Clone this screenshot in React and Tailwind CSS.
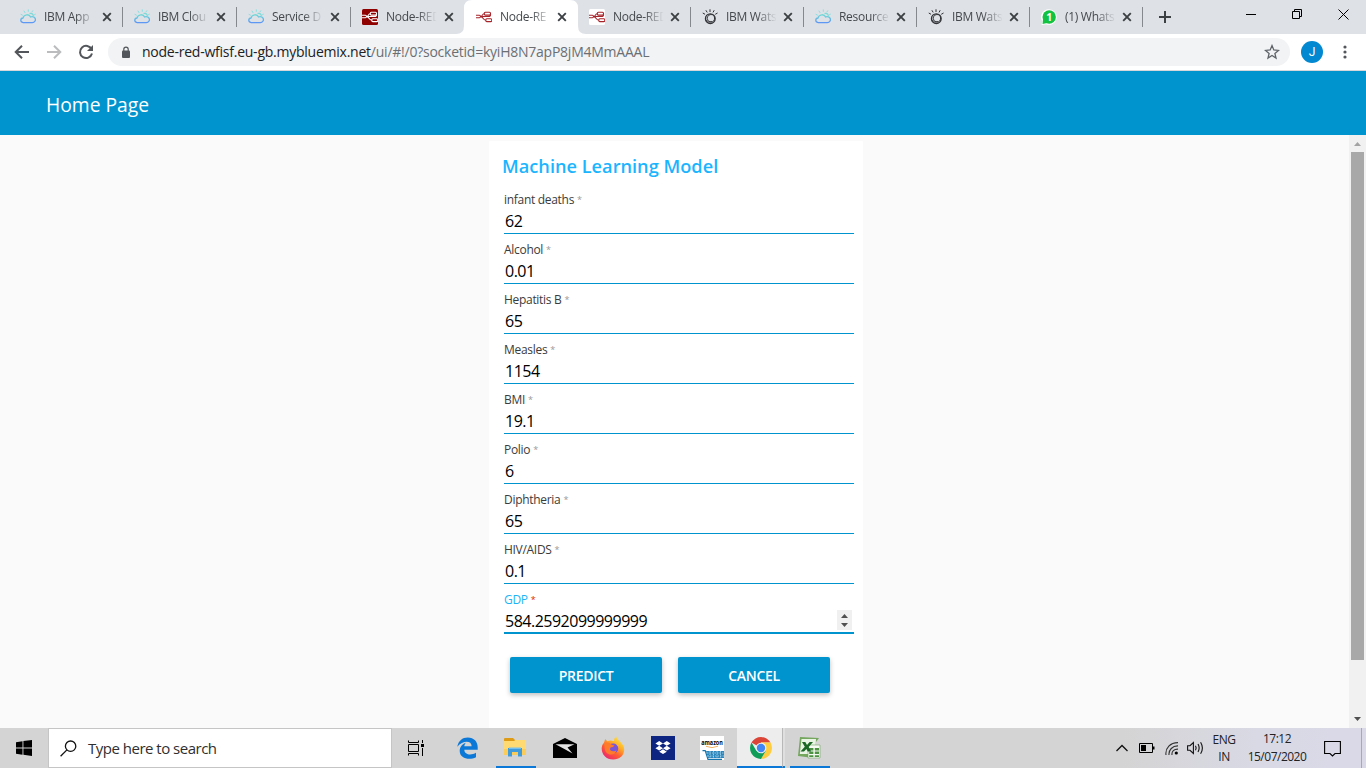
import React from "react";

function CloudIcon() {
  return (
    <svg width="16" height="16" viewBox="0 0 16 16" fill="none" strokeLinecap="round">
      <defs>
        <linearGradient id="cloud" x1="0" y1="0" x2="0" y2="1">
          <stop offset="0" stopColor="#6fdad5" />
          <stop offset="1" stopColor="#5c97f5" />
        </linearGradient>
      </defs>
      <path d="M3.2 13.6C-.2 13 .2 9.3 3 9C3.8 5.2 9.2 4.6 10.6 7.9C14.2 6.7 16.6 10 14.8 12.3Q14.1 13.6 12.3 13.6Z" stroke="url(#cloud)" strokeWidth="1.3" />
      <path d="M10 4.3Q13.3 4.1 13.4 7.4" stroke="#7adbd8" strokeWidth="1.2" />
      <path d="M8.3 .8V2.4M4 2L5 3.6M12.7 1.8L11.9 3M1 5.4L2.4 6.1M15.4 5.2L14.4 5.8" stroke="#8adfe0" strokeWidth="1" />
    </svg>
  );
}

function NodeRedIcon({ dark }) {
  const c = dark ? "#fff" : "#a8242b";
  return (
    <svg width="16" height="16" viewBox="0 0 16 16" fill="none">
      <rect width="16" height="16" rx="1.5" fill={dark ? "#8f0000" : "#fff"} />
      <g stroke={c} strokeWidth="1.1">
        <rect x="8.3" y="3.3" width="6.2" height="2.8" rx="1" />
        <rect x="9.8" y="9.8" width="6" height="2.8" rx="1" />
        <path d="M0 6.3H3.4Q4.5 6.3 4.5 7.5T3.4 8.7H0" />
        <path d="M4.5 7.5C7.2 7.5 5.6 4.7 8.3 4.7M4.5 7.5H12.5Q14.6 7.5 14.6 5.2M5 7.6C7.3 8 6.8 11.2 9.8 11.2" />
      </g>
    </svg>
  );
}

function WatsonIcon() {
  return (
    <svg width="16" height="16" viewBox="0 0 16 16" fill="none" stroke="#303236" strokeLinecap="round">
      <circle cx="8.3" cy="9.7" r="4.8" strokeWidth="1.4" />
      <circle cx="8.9" cy="9.2" r="3.7" strokeWidth=".9" />
      <path d="M4.2 11.4Q6.2 14.3 9.8 12.8" strokeWidth=".8" />
      <path d="M8 .7V2.6M4.1 1.6L5 3.1M12 1.6L11.2 3.1M1.1 4.2L2.7 5.1M15.2 4.2L13.6 5.1" strokeWidth="1" />
    </svg>
  );
}

function WhatsAppIcon() {
  return (
    <svg width="16" height="16" viewBox="0 0 16 16">
      <path d="M8 .2A7.8 7.8 0 1 1 5 15.2L.6 16L1.2 12A7.8 7.8 0 0 1 8 .2Z" fill="#fff" />
      <circle cx="8.2" cy="8" r="6.7" fill="#12c240" />
      <path d="M2 10L1.6 15L6 14Z" fill="#12c240" />
      <text x="8.2" y="11.8" textAnchor="middle" fontFamily="Open Sans, sans-serif" fontSize="10.5" fontWeight="700" fill="#fff">1</text>
    </svg>
  );
}

const tabs = [
  ["IBM App", <CloudIcon />],
  ["IBM Clou", <CloudIcon />],
  ["Service D", <CloudIcon />],
  ["Node-RED", <NodeRedIcon dark />],
  ["Node-RE", <NodeRedIcon />],
  ["Node-RED", <NodeRedIcon />],
  ["IBM Wats", <WatsonIcon />],
  ["Resource", <CloudIcon />],
  ["IBM Wats", <WatsonIcon />],
  ["(1) Whats", <WhatsAppIcon />],
];

function Tab({ label, icon, active, wide, divider }) {
  return (
    <div className={`relative flex h-[34px] shrink-0 items-center pl-[11px] ${wide ? "w-[114px]" : "w-[113px]"}`}>
      {active && (
        <svg className="absolute -left-[9px] top-0" width="130" height="34" viewBox="0 0 130 34">
          <path d="M0 34Q8 34 8 26V8Q8 0 16 0H114Q122 0 122 8V26Q122 34 130 34Z" fill="#fff" />
        </svg>
      )}
      <span className="relative h-4 w-4 shrink-0">{icon}</span>
      <span className="relative ml-2 w-[54px] whitespace-nowrap text-[12px] leading-4 tracking-[-0.3px] text-[#45494d] [mask-image:linear-gradient(to_right,black_58%,transparent_94%)]">
        {label}
      </span>
      <svg className={`relative ${wide ? "ml-1" : "ml-[3px]"}`} width="10" height="10" viewBox="0 0 10 10" stroke="#3c4043" strokeWidth="1.9">
        <path d="M1.2 1.2L8.8 8.8M8.8 1.2L1.2 8.8" />
      </svg>
      {divider && <span className="ml-auto h-5 w-px bg-[#85888c]" />}
    </div>
  );
}

function TabStrip() {
  return (
    <div className="flex h-[34px] bg-[#dee1e6] pl-[9px]">
      {tabs.map(([label, icon], i) => (
        <Tab key={i} label={label} icon={icon} active={i === 4} wide={i < 4} divider={i !== 3 && i !== 4} />
      ))}
      <svg className="ml-[15px] mt-[10px]" width="14" height="14" viewBox="0 0 14 14" stroke="#3c4043" strokeWidth="2">
        <path d="M7 1V13M1 7H13" />
      </svg>
      <div className="ml-auto flex items-start pt-[9px]">
        <svg width="10" height="11" viewBox="0 0 10 11" stroke="#000"><path d="M0 5.5H10" /></svg>
        <svg className="ml-9" width="11" height="11" viewBox="0 0 11 11" fill="none" stroke="#000">
          <path d="M.5 2.5H7.5V9.5H.5ZM2.5 2.5V.5H9.5V7.5H7.5" />
        </svg>
        <svg className="ml-[35px] mr-[17px]" width="11" height="11" viewBox="0 0 11 11" stroke="#000"><path d="M.5 .5L10.5 10.5M10.5 .5L.5 10.5" /></svg>
      </div>
    </div>
  );
}

function Toolbar() {
  return (
    <div className="flex h-[37px] items-center border-b border-[#d5d7da] bg-white pl-[13px]">
      <svg width="18" height="18" viewBox="0 0 18 18" fill="none" stroke="#53575b" strokeWidth="2"><path d="M16 9H3M9 2.7L2.7 9L9 15.3" /></svg>
      <svg className="ml-[14px]" width="18" height="18" viewBox="0 0 18 18" fill="none" stroke="#babcbe" strokeWidth="2"><path d="M2 9H15M9 2.7L15.3 9L9 15.3" /></svg>
      <svg className="ml-[14px]" width="18" height="18" viewBox="0 0 18 18" fill="none" stroke="#53575b" strokeWidth="2">
        <path d="M14.6 6.3A6.1 6.1 0 1 0 15 10.6" />
        <path d="M16 2V8H10Z" fill="#53575b" stroke="none" />
      </svg>
      <div className="ml-[13px] flex h-7 w-[1182px] items-center rounded-full bg-[#f1f3f4] pl-[13px] pr-[10px]">
        <svg width="10" height="13" viewBox="0 0 10 13" fill="none">
          <rect x="1" y="4.4" width="8" height="7.6" rx="1" fill="#53575b" />
          <path d="M2.8 5V3.3A2.2 2.2 0 0 1 7.2 3.3V5" stroke="#53575b" strokeWidth="1.2" />
        </svg>
        <span className="ml-[11px] whitespace-nowrap text-[14px] leading-5 tracking-[-0.24px] text-[#6b6f74]">
          <span className="text-[#202124]">node-red-wfisf.eu-gb.mybluemix.net</span>/ui/#!/0?socketid=kyiH8N7apP8jM4MmAAAL
        </span>
        <svg className="ml-auto" width="16" height="16" viewBox="0 0 16 16" fill="none" stroke="#5f6368" strokeWidth="1.3">
          <path d="M8 1.6L9.8 6L14.5 6.4L10.9 9.4L12 14L8 11.5L4 14L5.1 9.4L1.5 6.4L6.2 6Z" />
        </svg>
      </div>
      <div className="ml-[11px] flex h-[22px] w-[22px] items-center justify-center rounded-full bg-[#0288d1] font-[Roboto,sans-serif] text-[12px] text-white">J</div>
      <svg className="ml-5" width="4" height="14" viewBox="0 0 4 14" fill="#53575b"><circle cx="2" cy="2" r="1.6" /><circle cx="2" cy="7" r="1.6" /><circle cx="2" cy="12" r="1.6" /></svg>
    </div>
  );
}

const fields = [
  ["infant deaths", "62"],
  ["Alcohol", "0.01"],
  ["Hepatitis B", "65"],
  ["Measles", "1154"],
  ["BMI", "19.1"],
  ["Polio", "6"],
  ["Diphtheria", "65"],
  ["HIV/AIDS", "0.1"],
  ["GDP", "584.2592099999999"],
];

function Field({ label, value, focused }) {
  return (
    <div className="flex h-[50px] flex-col">
      <div className="mt-[6px] h-5 whitespace-nowrap text-[12px] leading-5 tracking-[-0.3px]">
        <span className={focused ? "text-[#1bb5f5]" : "text-[#3b3b3b]"}>{label}</span>
        <span className={`ml-[3px] align-[1px] text-[9px] ${focused ? "text-[#dd2c00]" : "text-[#999999]"}`}>*</span>
      </div>
      <div className={`flex items-start justify-between border-[#0094ce] pl-[1px] pr-[2px] text-[16px] text-black ${focused ? "h-[25px] border-b-2" : "h-[24px] border-b"}`}>
        <span className="leading-[22px] tracking-[-0.5px]">{value}</span>
        {focused && (
          <svg width="15" height="20" viewBox="0 0 15 20"><rect width="15" height="20" fill="#f0f0f0" /><path d="M4 8L7.5 4L11 8ZM4 13L7.5 17L11 13Z" fill="#505050" /></svg>
        )}
      </div>
    </div>
  );
}

function Button({ children }) {
  return (
    <button className="h-9 w-[152px] rounded-[2px] bg-[#0094ce] text-[14px] font-semibold tracking-[-0.28px] text-white shadow-[0_2px_5px_0_rgba(0,0,0,0.26)]">{children}</button>
  );
}

function Page() {
  return (
    <div className="flex h-[657px] flex-col bg-[#fafafa]">
      <div className="flex h-16 shrink-0 items-center bg-[#0094ce] pl-[46px] pt-1 text-[19.3px] text-white">Home Page</div>
      <div className="flex min-h-0 flex-1">
        <div className="ml-[489px] mt-[6px] w-[374px] bg-white">
          <h1 className="h-[43px] whitespace-nowrap pl-[13px] pt-[11px] text-[18.2px] font-semibold leading-7 text-[#1bb5ff]">Machine Learning Model</h1>
          <div className="ml-[15px] w-[350px]">
            {fields.map(([l, v], i) => <Field key={l} label={l} value={v} focused={i === 8} />)}
          </div>
          <div className="ml-[21px] mt-[23px] flex gap-4">
            <Button>PREDICT</Button>
            <Button>CANCEL</Button>
          </div>
        </div>
        <div className="ml-auto flex w-[17px] flex-col items-center bg-[#f1f1f1]">
          <svg width="17" height="17" viewBox="0 0 17 17"><path d="M5 11L8.5 7L12 11Z" fill="#a3a3a3" /></svg>
          <div className="h-[508px] w-[13px] bg-[#a8a8a8]" />
          <svg className="mt-auto" width="17" height="17" viewBox="0 0 17 17"><path d="M5 6L8.5 10L12 6Z" fill="#505050" /></svg>
        </div>
      </div>
    </div>
  );
}

function TaskIcon({ children, className = "" }) {
  return <div className={`flex h-10 w-12 shrink-0 items-center justify-center ${className}`}>{children}</div>;
}

function Taskbar() {
  return (
    <div className="flex h-10 items-center bg-[linear-gradient(to_right,#d4d4d4_0,#d4d4d4_82%,#d9d9e5_92%,#d9d9e8_100%)]">
      <TaskIcon>
        <svg width="16" height="16" viewBox="0 0 16 16"><path d="M0 2.2L6.5 1.3V7.5H0ZM7.4 1.1L16 0V7.5H7.4ZM0 8.4H6.5V14.7L0 13.8ZM7.4 8.4H16V16L7.4 14.8Z" /></svg>
      </TaskIcon>
      <div className="flex h-10 w-[344px] items-center border border-[#c5c5c5] bg-white pl-[11px]">
        <svg width="17" height="17" viewBox="0 0 17 17" fill="none" stroke="#111" strokeWidth="1.3"><circle cx="10.6" cy="6.2" r="5.2" /><path d="M6.9 9.9L.6 16.2" /></svg>
        <span className="ml-[11px] whitespace-nowrap pt-px text-[15px] tracking-[-0.5px] text-[#2f2f2f]">Type here to search</span>
      </div>
      <TaskIcon>
        <svg width="16" height="16" viewBox="0 0 16 16" fill="none" stroke="#000">
          <path d="M.5 .5V2.5H10.5V.5M.5 15.5V13.5H10.5V15.5M.5 4.5H10.5V11.5H.5ZM14.5 0V3M14.5 8V16" />
          <path d="M13 4H16V7H13Z" fill="#000" stroke="none" />
        </svg>
      </TaskIcon>
      <TaskIcon className="ml-[3px]">
        <svg width="21" height="22" viewBox="0 0 21 22"><path d="M.3 9.8C1.3 3.7 5.4.4 10.8.4C17 .4 20.7 4.7 20.7 10.2V12.8H7.3C7.6 18.3 14.6 18.5 19 15.8V20.2C12.2 23.8 2.7 21.4 2.7 14C2.7 9.7 5.4 7 8.8 5.7C7.7 6.9 7.4 8.4 7.3 9.3H14.6C14.8 3.2 5.5 3.4.3 9.8Z" fill="#0b78d7" /></svg>
      </TaskIcon>
      <TaskIcon className="relative">
        <svg width="22" height="20" viewBox="0 0 22 20">
          <path d="M0 1Q0 0 1 0H9L11 2V5H0Z" fill="#dd9b16" />
          <path d="M0 3H10L11.5 2H21Q22 2 22 3V17H0Z" fill="#ffda73" />
          <path d="M0 11H22V17H0Z" fill="#fccc5b" />
          <path d="M4 10H18V18.5H14V14H8V18.5H4Z" fill="#3f9bdb" />
          <path d="M5 9.5H17V11H5Z" fill="#73c0ee" />
        </svg>
        <span className="absolute bottom-0 left-[5px] h-[2px] w-10 bg-[#0b78d7]" />
      </TaskIcon>
      <TaskIcon className="ml-[2px]">
        <svg width="24" height="20" viewBox="0 0 24 20"><path d="M0 6L12 0L24 6V20H0Z" /><path d="M2.5 6.3H21.5L14.5 9.6L19.5 15.5L10.5 10.5Z" fill="#e3e3e3" /></svg>
      </TaskIcon>
      <TaskIcon>
        <svg width="24" height="24" viewBox="0 0 24 24">
          <defs><linearGradient id="fox" x1=".9" y1="0" x2=".2" y2="1"><stop stopColor="#fff14e" /><stop offset=".35" stopColor="#ffb327" /><stop offset=".65" stopColor="#ff5b32" /><stop offset="1" stopColor="#e92177" /></linearGradient></defs>
          <path d="M4.2 3L6.5 5.5Q8 4.4 9.5 4.5C11.7 4.7 12.5 5.1 13.2 5.2C12.6 2.5 14.5.9 15.3.4C15.7 3.9 19.5 4.6 21 8L22.5 9.8C25.1 17.9 19.7 23.5 12.2 23.5C5 23.5.3 18.1.7 11.7Q1 8.7 3.1 6.6Z" fill="url(#fox)" />
          <circle cx="12.2" cy="12.5" r="5" fill="#7855d9" />
          <path d="M3.2 6.8Q8.4 5.5 10.8 8.7L13.5 9.4Q12.5 11.5 9.5 11.6Q8 14.2 11 15Q14 15.8 15.5 14C14.4 20.6 5.2 20 3.7 13Z" fill="#ff7b2c" />
        </svg>
      </TaskIcon>
      <TaskIcon className="ml-[2px]">
        <svg width="24" height="24" viewBox="0 0 24 24"><rect width="24" height="24" fill="#0d2481" /><path d="M8.2 5L12 7.4L8.2 9.8L4.4 7.4ZM15.8 5L19.6 7.4L15.8 9.8L12 7.4ZM8.2 9.8L12 12.2L8.2 14.6L4.4 12.2ZM15.8 9.8L19.6 12.2L15.8 14.6L12 12.2ZM12 13.3L15.8 15.7L12 18.1L8.2 15.7Z" fill="#fff" /></svg>
      </TaskIcon>
      <TaskIcon className="ml-px">
        <svg width="24" height="24" viewBox="0 0 24 24">
          <rect width="24" height="24" fill="#fff" />
          <text x="12" y="8.8" textAnchor="middle" textLength="21.5" lengthAdjust="spacingAndGlyphs" fontFamily="Open Sans, sans-serif" fontSize="6.5" fontWeight="700">amazon</text>
          <path d="M6 10.3Q12 13 18 10.2" fill="none" stroke="#f2a64d" strokeWidth=".9" />
          <path d="M2.5 14.6H5.2L8 23.4H22" fill="none" stroke="#1574ac" strokeWidth="1.2" />
          <path d="M6 15H24V22H8Z" fill="#2985bb" />
          <path d="M7 17H24M7.5 20H24M10 15V22M13.5 15V22M17 15V22M20.5 15V22" stroke="#a5d3eb" strokeWidth=".9" strokeDasharray="1.5 1" />
        </svg>
      </TaskIcon>
      <div className="ml-px flex h-10 w-[45px] items-center justify-center border-b-2 border-[#0b78d7] bg-[#ededed] pl-[2px] pt-[2px]">
        <svg width="22" height="22" viewBox="0 0 22 22">
          <path d="M11 11L1.5 5.5A11 11 0 0 1 20.5 5.5H11Z" fill="#db4437" />
          <path d="M11 11L11 5.5H20.5A11 11 0 0 1 11 22L15.8 13.7Z" fill="#ffcd40" />
          <path d="M11 11L15.8 13.7L11 22A11 11 0 0 1 1.5 5.5L6.3 13.7Z" fill="#0f9d58" />
          <circle cx="11" cy="11" r="5.3" fill="#f1f1f1" /><circle cx="11" cy="11" r="4.2" fill="#4285f4" />
        </svg>
      </div>
      <div className="h-10 w-[3px] border-b-2 border-l border-b-[#0b78d7] border-l-[#b8b8b8] bg-[#dfdfdf]" />
      <TaskIcon className="relative">
        <svg width="24" height="24" viewBox="0 0 24 24">
          <path d="M3 1L22 2L19 6L17 22L1 20Z" fill="#75a75f" />
          <path d="M4.5 3H19L18 18H2.8Z" fill="#e9f4e4" />
          <path d="M11 9H23V22H11Z" fill="#f5fbf3" stroke="#6f9d62" strokeWidth=".6" />
          <path d="M12.2 12H16.4V14.5H12.2ZM17.8 12H22V14.5H17.8ZM12.2 15.6H16.4V18H12.2ZM17.8 15.6H22V18H17.8ZM12.2 19.2H16.4V21H12.2ZM17.8 19.2H22V21H17.8Z" fill="#4d9142" />
          <path d="M5 6H8.3L10 9L12.6 6H16L11.7 11L14.2 15.5H10.8L9.4 12.9L7 15.5H3.5L7.8 10.7Z" fill="#1b6724" />
        </svg>
        <span className="absolute bottom-0 left-[5px] h-[2px] w-10 bg-[#0b78d7]" />
      </TaskIcon>
      <div className="ml-auto flex h-10 items-center text-[#222]">
        <svg width="12" height="8" viewBox="0 0 12 8" fill="none" stroke="#111" strokeWidth="1.3"><path d="M.5 7L6 1.5L11.5 7" /></svg>
        <svg className="ml-[11px]" width="16" height="10" viewBox="0 0 16 10"><path d="M.5 .5H13.5V9.5H.5Z" fill="none" stroke="#000" /><path d="M2 2H7V8H2ZM14 3.5H15.5V6.5H14Z" /></svg>
        <svg className="ml-[10px]" width="14" height="14" viewBox="0 0 14 14" fill="none" stroke="#333" strokeWidth="1.1"><path d="M1 14C0 7 5.5 1.5 13 1.6M4 14C3.5 9 7.5 4.7 13 4.9M7 14C6.5 10.5 9 8 13 8.1" /><circle cx="11.3" cy="12" r="1.6" fill="#000" stroke="none" /></svg>
        <svg className="ml-2" width="18" height="14" viewBox="0 0 18 14" fill="none" stroke="#111" strokeWidth="1.1"><path d="M.6 4.7H3L6.4 1.5V12.5L3 9.3H.6ZM8.5 4.8Q9.8 7 8.5 9.2M11 3Q13.3 7 11 11M13.6 1.2Q17.2 7 13.6 12.8" /></svg>
        <div className="ml-[6px] flex w-[26px] flex-col items-center whitespace-nowrap text-[12px] leading-[17px] tracking-[-0.5px]"><span>ENG</span><span>IN</span></div>
        <div className="ml-[8px] flex w-[64px] flex-col items-center whitespace-nowrap pb-[1px] text-[12px] leading-[18px] tracking-[-0.5px]"><span>17:12</span><span>15/07/2020</span></div>
        <svg className="ml-[15px]" width="17" height="17" viewBox="0 0 17 17" fill="none" stroke="#000" strokeWidth="1.1"><path d="M.6 1.5H16.4V13.5H11L8.5 16L6 13.5H.6Z" /></svg>
        <span className="ml-[20px] mr-[4px] h-10 w-px bg-[#a9a9b5]" />
      </div>
    </div>
  );
}

export default function App() {
  return (
    <div className="flex h-[768px] w-[1366px] flex-col overflow-hidden font-['Open_Sans','Noto_Sans',sans-serif]">
      <TabStrip />
      <Toolbar />
      <Page />
      <Taskbar />
    </div>
  );
}
